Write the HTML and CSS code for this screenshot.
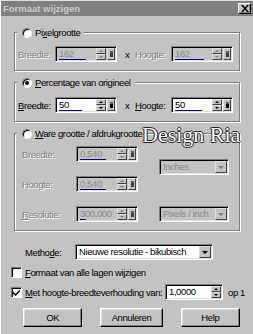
FILE: index.html
```html
<!DOCTYPE html>
<html lang="nl">
<head>
    <meta charset="UTF-8">
    <meta name="viewport" content="width=device-width, initial-scale=1.0">
    <title>Formaat wijzigen</title>
    <link rel="stylesheet" href="styles.css">
</head>
<body>
    <div class="dialog">
        <div class="titlebar">
            <span class="title">Formaat wijzigen</span>
            <span class="close-btn">
                <svg width="8" height="7" viewBox="0 0 8 7"><path d="M0 0h2l2 2.4L6 0h2L5 3.5 8 7H6L4 4.6 2 7H0l3-3.5z" fill="#000"/></svg>
            </span>
        </div>

        <div class="content">
            <!-- Pixel size (disabled) -->
            <fieldset class="group group-pixel">
                <legend><span class="radio"></span><span>Pi<u>x</u>elgrootte</span></legend>
                <div class="row">
                    <span class="label disabled">Breedte:</span>
                    <div class="spin spin-disabled">
                        <div class="spin-field"><span class="spin-val">162</span><span class="spin-bar" style="width:27px"></span></div>
                        <span class="spin-arrows"><i class="arrow-up"></i><i class="arrow-down"></i></span>
                        <span class="spin-menu"><b></b></span>
                    </div>
                    <span class="times">x</span>
                    <span class="label label-right disabled">Hoogte:</span>
                    <div class="spin spin-disabled">
                        <div class="spin-field"><span class="spin-val">162</span><span class="spin-bar" style="width:29px"></span></div>
                        <span class="spin-arrows"><i class="arrow-up"></i><i class="arrow-down"></i></span>
                        <span class="spin-menu"><b></b></span>
                    </div>
                </div>
            </fieldset>

            <!-- Percentage -->
            <fieldset class="group group-percent">
                <legend><span class="radio radio-checked"></span><span><u>P</u>ercentage van origineel</span></legend>
                <div class="row">
                    <span class="label"><u>B</u>reedte:</span>
                    <div class="spin">
                        <div class="spin-field"><span class="spin-val">50</span><span class="spin-bar" style="width:23px"></span></div>
                        <span class="spin-arrows"><i class="arrow-up"></i><i class="arrow-down"></i></span>
                        <span class="spin-menu"><b></b></span>
                    </div>
                    <span class="times">x</span>
                    <span class="label label-right"><u>H</u>oogte:</span>
                    <div class="spin">
                        <div class="spin-field"><span class="spin-val">50</span><span class="spin-bar" style="width:27px"></span></div>
                        <span class="spin-arrows"><i class="arrow-up"></i><i class="arrow-down"></i></span>
                        <span class="spin-menu"><b></b></span>
                    </div>
                </div>
            </fieldset>

            <!-- Print size (disabled) -->
            <fieldset class="group group-print">
                <legend><span class="radio"></span><span><u>W</u>are grootte / afdrukgrootte</span></legend>
                <div class="print-grid">
                    <span class="label disabled">Breedte:</span>
                    <div class="spin spin-disabled">
                        <div class="spin-field"><span class="spin-val">0,540</span><span class="spin-bar" style="width:26px"></span></div>
                        <span class="spin-arrows"><i class="arrow-up"></i><i class="arrow-down"></i></span>
                        <span class="spin-menu"><b></b></span>
                    </div>
                    <div class="combo combo-disabled combo-units">
                        <span class="combo-text">Inches</span>
                        <span class="combo-btn"><i class="arrow-down"></i></span>
                    </div>

                    <span class="label disabled">Hoogte:</span>
                    <div class="spin spin-disabled">
                        <div class="spin-field"><span class="spin-val">0,540</span><span class="spin-bar" style="width:26px"></span></div>
                        <span class="spin-arrows"><i class="arrow-up"></i><i class="arrow-down"></i></span>
                        <span class="spin-menu"><b></b></span>
                    </div>

                    <span class="label disabled"><u>R</u>esolutie:</span>
                    <div class="spin spin-disabled">
                        <div class="spin-field"><span class="spin-val">300,000</span><span class="spin-bar" style="width:6px"></span></div>
                        <span class="spin-arrows"><i class="arrow-up"></i><i class="arrow-down"></i></span>
                        <span class="spin-menu"><b></b></span>
                    </div>
                    <div class="combo combo-disabled combo-res">
                        <span class="combo-text">Pixels / inch</span>
                        <span class="combo-btn"><i class="arrow-down"></i></span>
                    </div>
                </div>
            </fieldset>

            <div class="method-row">
                <span class="method-label">Metho<u>d</u>e:</span>
                <div class="combo combo-method">
                    <span class="combo-text">Nieuwe resolutie - bikubisch</span>
                    <span class="combo-btn"><i class="arrow-down"></i></span>
                </div>
            </div>

            <div class="check-row check-row-layers">
                <span class="check"></span>
                <span><u>F</u>ormaat van alle lagen wijzigen</span>
            </div>

            <div class="check-row check-row-ratio">
                <span class="check check-on">
                    <svg width="7" height="7" viewBox="0 0 7 7"><path d="M0 2.5l2.5 2.5L7 0.5v2L2.5 7 0 4.5z" fill="#000"/></svg>
                </span>
                <span class="ratio-label"><u>M</u>et hoogte-breedteverhouding van:</span>
                <div class="spin spin-ratio">
                    <div class="spin-field"><span class="spin-val">1,0000</span></div>
                    <span class="spin-arrows"><i class="arrow-up"></i><i class="arrow-down"></i></span>
                </div>
                <span class="ratio-suffix">op 1</span>
            </div>

            <div class="buttons">
                <button class="btn btn-ok">OK</button>
                <button class="btn btn-cancel">Annuleren</button>
                <button class="btn">Help</button>
            </div>
        </div>

        <div class="watermark">Design Ria</div>
    </div>
</body>
</html>
```

FILE: styles.css
```css
* {
    margin: 0;
    padding: 0;
    box-sizing: border-box;
}

body {
    background-color: #c3c3c3;
    font-family: "Liberation Sans", Arial, sans-serif;
    font-size: 9.5px;
    letter-spacing: -0.4px;
    color: #000;
}

u {
    text-decoration: underline;
}

.dialog {
    position: relative;
    width: 253px;
    height: 334px;
    border-top: 1px solid #dfdfdf;
    border-left: 1px solid #fff;
    overflow: hidden;
}

/* Title bar */
.titlebar {
    height: 15px;
    background-color: #808080;
    display: flex;
    align-items: center;
    justify-content: space-between;
    padding: 0 2px 0 2px;
}

.title {
    color: #cccccc;
    font-weight: bold;
    font-size: 9.5px;
    letter-spacing: 0;
}

.close-btn {
    width: 13px;
    height: 11px;
    display: flex;
    align-items: center;
    justify-content: center;
    background-color: #c3c3c3;
    border: 1px solid;
    border-color: #fff #000 #000 #fff;
    box-shadow: inset -1px -1px 0 #808080;
}

.content {
    padding: 0 13px;
}

/* Group boxes */
.group {
    border: 1px solid #808080;
    box-shadow: 1px 1px 0 #fff, inset 1px 1px 0 #fff;
    padding: 8px 6px 8px 2px;
    min-width: 0;
}

.group legend {
    display: flex;
    align-items: center;
    gap: 3px;
    padding: 0 4px 0 5px;
    line-height: 11px;
    height: 11px;
    white-space: nowrap;
    background-color: #c3c3c3;
}

.group-pixel {
    margin-top: 11px;
}

.group-percent {
    margin-top: 6px;
    padding-top: 9px;
}

.group-print {
    margin-top: 6px;
    padding-top: 7px;
}

.radio {
    position: relative;
    width: 10px;
    height: 10px;
    border-radius: 50%;
    background-color: #fff;
    border: 1px solid;
    border-color: #808080 #fff #fff #808080;
    box-shadow: inset 1px 1px 0 #000;
}

.radio-checked::after {
    content: "";
    position: absolute;
    left: 2px;
    top: 2px;
    width: 4px;
    height: 4px;
    border-radius: 50%;
    background-color: #000;
}

.row {
    display: flex;
    align-items: center;
}

.label {
    width: 38px;
    padding-left: 1px;
    white-space: nowrap;
}

.label-right {
    width: 36px;
    padding-left: 0;
}

.disabled {
    color: #808080;
    text-shadow: 1px 1px 0 #fff;
}

.times {
    width: 18px;
    padding-left: 8px;
}

/* Spin boxes */
.spin {
    display: flex;
    flex-shrink: 0;
    width: 62px;
    height: 16px;
    padding: 1px;
    background-color: #fff;
    border: 1px solid;
    border-color: #808080 #fff #fff #808080;
    box-shadow: inset 1px 1px 0 #000, inset -1px -1px 0 #dfdfdf;
}

.spin-disabled {
    background-color: #c3c3c3;
    color: #8a8a8a;
}

.spin-field {
    flex: 1;
    display: flex;
    flex-direction: column;
    padding: 0 0 0 2px;
}

.spin-val {
    line-height: 11px;
}

.spin-bar {
    height: 2px;
    margin-top: auto;
    background-color: #000080;
}

.spin-arrows {
    width: 10px;
    display: flex;
    flex-direction: column;
}

.spin-arrows i,
.spin-menu,
.combo-btn {
    display: flex;
    align-items: center;
    justify-content: center;
    background-color: #c3c3c3;
    border: 1px solid;
    border-color: #dfdfdf #404040 #404040 #dfdfdf;
}

.spin-arrows i {
    flex: 1;
}

.spin-arrows i::after,
.combo-btn i::after {
    content: "";
    border-left: 2px solid transparent;
    border-right: 2px solid transparent;
}

.arrow-up::after {
    border-bottom: 2px solid #000;
}

.arrow-down::after {
    border-top: 2px solid #000;
}

.spin-menu {
    width: 8px;
    margin-left: 1px;
}

.spin-menu b {
    width: 3px;
    height: 6px;
    background-color: #000;
    box-shadow: inset 0 2px 0 #606060;
}

.spin-disabled .arrow-up::after {
    border-bottom-color: #808080;
}

.spin-disabled .arrow-down::after {
    border-top-color: #808080;
}

.spin-disabled .spin-menu b {
    background-color: #404040;
}

/* Print size grid */
.print-grid {
    display: grid;
    grid-template-columns: 54px 62px 21px 70px;
    grid-template-rows: 16px 16px 16px;
    row-gap: 14px;
    align-items: center;
    margin-left: 5px;
}

.print-grid .label {
    grid-column: 1;
    width: auto;
    padding-left: 0;
}

.print-grid .spin {
    grid-column: 2;
}

.combo-units {
    grid-column: 4;
    grid-row: 1 / 3;
    align-self: start;
    margin-top: 13px;
}

.combo-res {
    grid-column: 4;
    grid-row: 3;
}

/* Combo boxes */
.combo {
    display: flex;
    height: 16px;
    padding: 1px;
    background-color: #fff;
    border: 1px solid;
    border-color: #808080 #fff #fff #808080;
    box-shadow: inset 1px 1px 0 #000, inset -1px -1px 0 #dfdfdf;
}

.combo-disabled {
    background-color: #c3c3c3;
    color: #8a8a8a;
}

.combo-text {
    flex: 1;
    padding-left: 2px;
    line-height: 12px;
    white-space: nowrap;
    overflow: hidden;
}

.combo-btn {
    width: 12px;
}

.combo-btn i::after {
    display: block;
    border-left-width: 3px;
    border-right-width: 3px;
    border-top: 3px solid #000;
}

.combo-disabled .combo-btn i::after {
    border-top-color: #808080;
}

.method-row {
    display: flex;
    align-items: center;
    margin: 13px 0 0 11px;
}

.method-label {
    width: 50px;
}

.combo-method {
    width: 138px;
}

/* Checkboxes */
.check-row {
    display: flex;
    align-items: center;
    margin-left: -3px;
    white-space: nowrap;
}

.check-row-layers {
    height: 13px;
    margin-top: 6px;
}

.check-row-ratio {
    height: 16px;
    margin-top: 5px;
}

.check {
    display: flex;
    flex-shrink: 0;
    align-items: center;
    justify-content: center;
    width: 11px;
    height: 11px;
    margin-right: 3px;
    background-color: #fff;
    border: 1px solid;
    border-color: #808080 #fff #fff #808080;
    box-shadow: inset 1px 1px 0 #000;
}

.ratio-label {
    flex-shrink: 0;
    width: 140px;
}

.spin-ratio {
    width: 58px;
}

.ratio-suffix {
    flex-shrink: 0;
    margin-left: 5px;
}

/* Buttons */
.buttons {
    display: flex;
    gap: 18px;
    margin: 8px 0 0 9px;
}

.btn {
    width: 60px;
    height: 19px;
    font-family: "Liberation Sans", Arial, sans-serif;
    font-size: 9.5px;
    letter-spacing: -0.4px;
    color: #000;
    background-color: #c3c3c3;
    border: 1px solid;
    border-color: #fff #000 #000 #fff;
    box-shadow: inset -1px -1px 0 #808080, inset 1px 1px 0 #dfdfdf;
}

.btn-cancel {
    width: 63px;
}

/* Watermark over the dialog */
.watermark {
    position: absolute;
    left: 141px;
    top: 123px;
    font-family: "Liberation Serif", "Times New Roman", serif;
    font-size: 22px;
    line-height: 22px;
    letter-spacing: 0;
    color: #fff;
    text-shadow: 1px 0 0 #222, -1px 0 0 #222, 0 1px 0 #222, 0 -1px 0 #222;
}
```
